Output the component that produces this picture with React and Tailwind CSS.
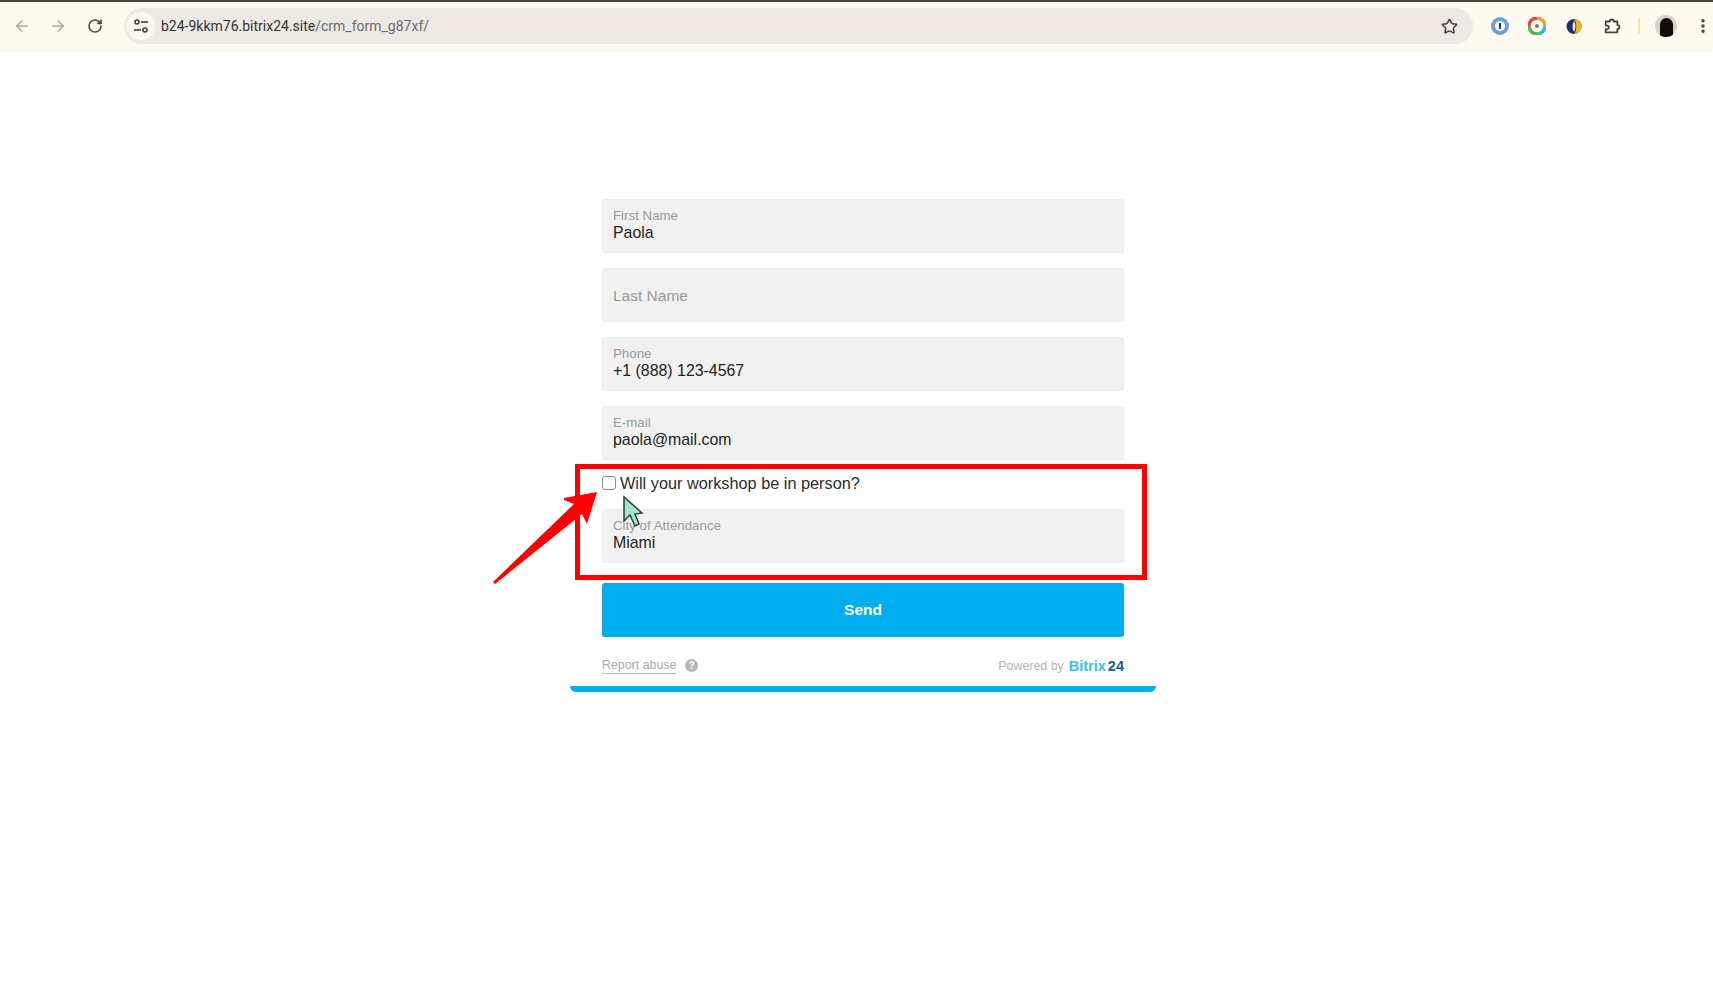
import React from 'react';
import { ArrowLeft, ArrowRight, RotateCw, Star, MoreVertical } from 'lucide-react';

const Field = ({ label, value }) => (
  <div className="h-[54px] rounded-[3px] bg-[#f1f1f1] border border-[#ececec] px-[10px] flex flex-col justify-center">
    {value ? (
      <div className="-mt-[2px]">
        <div className="text-[13.300px] leading-[15px] text-[#9a9a9a]">{label}</div>
        <div className="text-[15.900px] leading-[20px] text-[#222]">{value}</div>
      </div>
    ) : (
      <span className="text-[15.500px] mt-[1px] text-[#999]">{label}</span>
    )}
  </div>
);

const TuneIcon = () => (
  <svg width="16" height="16" viewBox="0 0 16 16" fill="none" stroke="#3f3f3f" strokeWidth="1.6">
    <circle cx="4" cy="4" r="2" />
    <path d="M8 4h7" />
    <path d="M1 12h7" />
    <circle cx="12" cy="12" r="2" />
  </svg>
);

const Toolbar = () => (
  <div className="h-[50px] bg-[#fdfaf0] border-t-2 border-[#4a4a40] shadow-[0_1px_2px_rgba(0,0,0,0.05)] flex items-center shrink-0">
    <ArrowLeft size={18} className="ml-[13px] text-[#a8a8a4]" />
    <ArrowRight size={18} className="ml-[18px] text-[#a8a8a4]" />
    <RotateCw size={16} strokeWidth={2.4} className="ml-[20px] text-[#4a4a4a]" />
    <div className="ml-[21px] w-[1349px] h-[36px] rounded-full bg-[#eee9e4] flex items-center">
      <div className="w-[28px] h-[28px] ml-[3px] rounded-full bg-[#fbf8f2] flex items-center justify-center">
        <TuneIcon />
      </div>
      <span className="ml-[6px] text-[14px] text-[#6a6a6a] font-['Roboto',sans-serif]">
        <span className="text-[#333]">b24-9kkm76.bitrix24.site</span>/crm_form_g87xf/
      </span>
      <Star size={17} strokeWidth={2.2} className="ml-auto mr-[15px] text-[#444]" />
    </div>
    <div className="ml-[18px] w-[18px] h-[18px] rounded-full bg-[#6f9fdc] flex items-center justify-center">
      <div className="w-[10px] h-[10px] rounded-full bg-white flex items-center justify-center">
        <div className="w-[2px] h-[6px] bg-[#1f3f73]" />
      </div>
    </div>
    <svg className="ml-[19px]" width="18" height="18" viewBox="0 0 18 18" fill="none">
      <path d="M9 1a8 8 0 0 1 8 8" stroke="#f1a33a" strokeWidth="3.5" />
      <path d="M17 9a8 8 0 0 1-8 8" stroke="#3db5d8" strokeWidth="3.5" />
      <path d="M9 17a8 8 0 0 1-8-8" stroke="#53b84f" strokeWidth="3.5" />
      <path d="M1 9a8 8 0 0 1 8-8" stroke="#e5484d" strokeWidth="3.5" />
      <circle cx="9" cy="9" r="2" fill="#777" />
    </svg>
    <svg className="ml-[20px]" width="16" height="18" viewBox="0 0 16 18">
      <circle cx="8" cy="9.500" r="7.500" fill="#1c3468" />
      <path d="M8 2a7.500 7.500 0 0 1 0 15c3-3 3-11 0-15z" fill="#f0b429" />
      <path d="M8 4c-2 3-2 8 0 11 2-3 2-8 0-11z" fill="#f7e7b0" />
    </svg>
    <svg className="ml-[21px]" width="18" height="18" viewBox="0 0 20 20" fill="none" stroke="#444" strokeWidth="2" strokeLinejoin="round">
      <path d="M3 5h4.500a2.200 2.200 0 0 1 4.400 0H16v4a2.200 2.200 0 0 1 0 4.400V17H3v-3.500h1.500a2 2 0 0 0 0-4H3z" />
    </svg>
    <div className="ml-[17px] w-[2px] h-[16px] bg-[#f3e3a6]" />
    <div className="ml-[15px] w-[22px] h-[22px] rounded-full bg-[#d9d2c6] flex items-end justify-center overflow-hidden">
      <div className="w-[13px] h-[19px] rounded-t-full bg-[#120d0c]" />
    </div>
    <MoreVertical size={18} strokeWidth={2.6} className="ml-[17px] text-[#444]" />
  </div>
);

export default function App() {
  return (
    <div className="relative h-[998px] overflow-hidden bg-white font-['Liberation_Sans',Arial,sans-serif] flex flex-col">
      <Toolbar />

      <div className="w-[586px] ml-[570px] mt-[149px]">
        <div className="px-[32px] flex flex-col">
          <div className="flex flex-col gap-[15px]">
            <Field label="First Name" value="Paola" />
            <Field label="Last Name" />
            <Field label="Phone" value="+1 (888) 123-4567" />
            <Field label="E-mail" value="paola@mail.com" />
          </div>
          <label className="flex items-center h-[49px] pb-[2px]">
            <span className="w-[14px] h-[14px] -mt-[2px] rounded-[3px] border-[1.500px] border-[#8a8a8a] bg-white" />
            <span className="ml-[4px] text-[16.300px] text-[#2b2b2b]">Will your workshop be in person?</span>
          </label>
          <Field label="City of Attendance" value="Miami" />
          <button className="mt-[20px] h-[54px] rounded-[3px] bg-[#00aeef] text-white text-[15.500px] font-bold">Send</button>
          <div className="flex items-center justify-between h-[49px] pt-[8px]">
            <div className="flex items-center">
              <span className="text-[12.400px] text-[#aaa] border-b border-[#bbb] leading-[15px]">Report abuse</span>
              <span className="ml-[9px] w-[13px] h-[13px] rounded-full bg-[#b5b5b5] text-white text-[10px] leading-[13px] text-center font-bold">?</span>
            </div>
            <div className="flex items-center mt-[2px]">
              <span className="text-[12.400px] text-[#b5b5b5]">Powered by</span>
              <span className="ml-[5px] text-[14.500px] font-bold text-[#3bbdee]">Bitrix</span>
              <span className="ml-[2px] text-[14.500px] font-bold text-[#1e5a8c]">24</span>
            </div>
          </div>
        </div>
        <div className="h-[6px] rounded-b-[8px] bg-[#00aeef]" />
      </div>

      {/* annotation overlay */}
      <div className="absolute left-[575px] top-[464px] w-[572px] h-[116px] border-[5px] border-[#ff0000]" />
      <svg className="absolute left-[490px] top-[488px]" width="115" height="100" viewBox="0 0 115 100" fill="#ff0000">
        <path d="M107 4 L74 10 L74 12 L84 16 L3 94 L5 96 L92 26 L97 36 Z" />
      </svg>
      <svg className="absolute left-[622px] top-[495px]" width="22" height="34" viewBox="0 0 22 34">
        <path d="M2 2 L2 26 L8 20 L13 31 L17 29 L13 19 L20 18 Z" fill="#9fe6cc" stroke="#2c3f3a" strokeWidth="1.500" />
      </svg>
    </div>
  );
}
